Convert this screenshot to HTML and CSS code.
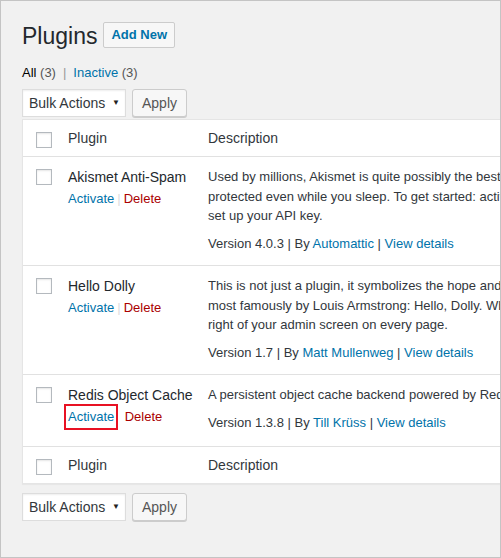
FILE: index.html
```html
<!DOCTYPE html>
<html>
<head>
<meta charset="utf-8">
<link rel="stylesheet" href="styles.css">
</head>
<body>
<div class="frame">
  <div class="wrap">
    <div class="title-row">
      <h1 class="page-title">Plugins</h1>
      <a class="add-new">Add New</a>
    </div>
    <ul class="subsubsub">
      <li><a class="current">All <span class="count">(3)</span></a><span class="sep">|</span></li>
      <li><a class="link">Inactive <span class="count">(3)</span></a></li>
    </ul>
    <div class="tablenav">
      <div class="select">Bulk Actions <span class="arrow">▼</span></div>
      <button class="button">Apply</button>
    </div>
    <div class="table-box">
      <div class="row head">
        <div class="cb"><span class="checkbox"></span></div>
        <div class="name th">Plugin</div>
        <div class="desc th">Description</div>
      </div>
      <div class="row item">
        <div class="cb"><span class="checkbox"></span></div>
        <div class="name">
          <div class="plugin-name">Akismet Anti-Spam</div>
          <div class="actions"><a class="link">Activate</a><span class="asep">|</span><a class="delete">Delete</a></div>
        </div>
        <div class="desc">
          <p class="desc-text">Used by millions, Akismet is quite possibly the best way in the world to protect your blog from spam. It keeps your site<br>protected even while you sleep. To get started: activate the Akismet plugin and then go to your Akismet Settings page to<br>set up your API key.</p>
          <p class="meta">Version 4.0.3 | By <a class="link">Automattic</a> | <a class="link">View details</a></p>
        </div>
      </div>
      <div class="row item">
        <div class="cb"><span class="checkbox"></span></div>
        <div class="name">
          <div class="plugin-name">Hello Dolly</div>
          <div class="actions"><a class="link">Activate</a><span class="asep">|</span><a class="delete">Delete</a></div>
        </div>
        <div class="desc">
          <p class="desc-text">This is not just a plugin, it symbolizes the hope and enthusiasm of an entire generation summed up in two words sung<br>most famously by Louis Armstrong: Hello, Dolly. When activated you will randomly see a lyric from Hello, Dolly in the upper<br>right of your admin screen on every page.</p>
          <p class="meta">Version 1.7 | By <a class="link">Matt Mullenweg</a> | <a class="link">View details</a></p>
        </div>
      </div>
      <div class="row item last">
        <div class="cb"><span class="checkbox"></span></div>
        <div class="name">
          <div class="plugin-name">Redis Object Cache</div>
          <div class="actions"><a class="link highlight">Activate</a><span class="asep hidden">|</span><a class="delete">Delete</a></div>
        </div>
        <div class="desc">
          <p class="desc-text">A persistent object cache backend powered by Redis. Supports Predis, PhpRedis, HHVM, replication, clustering and WP-CLI.</p>
          <p class="meta">Version 1.3.8 | By <a class="link">Till Krüss</a> | <a class="link">View details</a></p>
        </div>
      </div>
      <div class="row head foot">
        <div class="cb"><span class="checkbox"></span></div>
        <div class="name th">Plugin</div>
        <div class="desc th">Description</div>
      </div>
    </div>
    <div class="tablenav bottom">
      <div class="select">Bulk Actions <span class="arrow">▼</span></div>
      <button class="button">Apply</button>
    </div>
  </div>
</div>
</body>
</html>
```

FILE: styles.css
```css
* { box-sizing: border-box; }
html, body { margin: 0; padding: 0; }
body {
  font-family: "Liberation Sans", Arial, sans-serif;
  font-size: 13px;
  color: #444;
  background: #fff;
}
.frame {
  width: 501px;
  height: 558px;
  border: 1px solid #c4c4c4;
  background: #f1f1f1;
  overflow: hidden;
}
.wrap {
  padding: 20px 0 0 21px;
  width: 900px;
}
.title-row {
  display: flex;
  align-items: center;
  height: 28px;
}
.page-title {
  margin: 0;
  font-size: 23px;
  font-weight: 400;
  color: #23282d;
  line-height: 29px;
  position: relative;
  top: 1px;
}
.add-new {
  margin-left: 6px;
  height: 26px;
  line-height: 24px;
  padding: 0 7px;
  border: 1px solid #ccc;
  border-radius: 2px;
  background: #f7f7f7;
  color: #0073aa;
  font-weight: 600;
  font-size: 13px;
}
.subsubsub {
  list-style: none;
  margin: 14px 0 0;
  padding: 0;
  display: flex;
  font-size: 13px;
  line-height: 20px;
  color: #666;
}
.subsubsub .current { color: #000; font-weight: 400; }
.subsubsub .count { color: #555; }
.subsubsub .sep { margin: 0 7px 0 7px; color: #999; }
.link { color: #0073aa; }
.tablenav {
  display: flex;
  gap: 6px;
  margin-top: 6px;
  height: 28px;
}
.select {
  width: 104px;
  height: 28px;
  border: 1px solid #ddd;
  background: #fff;
  box-shadow: inset 0 1px 2px rgba(0,0,0,.07);
  color: #32373c;
  font-size: 14px;
  line-height: 26px;
  padding-left: 6px;
  position: relative;
}
.select .arrow {
  position: absolute;
  right: 5px;
  top: 0;
  font-size: 8px;
  color: #222;
}
.button {
  width: 55px;
  height: 28px;
  border: 1px solid #ccc;
  border-radius: 3px;
  background: #f7f7f7;
  box-shadow: 0 1px 0 #ccc;
  color: #555;
  font-family: inherit;
  font-size: 14px;
  padding: 0;
}
.table-box {
  margin-top: 2px;
  width: 860px;
  background: #fff;
  border: 1px solid #e5e5e5;
  box-shadow: 0 1px 1px rgba(0,0,0,.04);
}
.row {
  display: flex;
  border-bottom: 1px solid #e1e1e1;
}
.row.foot { border-bottom: 0; border-top: 1px solid #e1e1e1; margin-top: -1px; }
.cb { width: 35px; padding: 12px 0 0 13px; flex: none; }
.checkbox {
  display: block;
  width: 16px;
  height: 16px;
  border: 1px solid #b4b9be;
  background: #fff;
  box-shadow: inset 0 1px 2px rgba(0,0,0,.1);
}
.name { width: 140px; flex: none; padding: 10px 10px 12px 10px; white-space: nowrap; }
.desc { flex: 1; padding: 10px 10px 12px 10px; white-space: nowrap; }
.row.last .desc { padding-bottom: 14px; }
.th {
  font-size: 14px;
  color: #32373c;
  line-height: 19px;
  padding-top: 9px;
  padding-bottom: 8px;
}
.head .cb { padding-top: 12px; }
.plugin-name {
  font-size: 14px;
  color: #23282d;
  line-height: 20px;
}
.actions {
  margin-top: 2px;
  font-size: 13px;
  line-height: 20px;
  display: flex;
}
.asep { color: #ddd; margin: 0 3px; }
.asep.hidden { visibility: hidden; }
.delete { color: #a00; }
.highlight {
  outline: 2px solid #e81123;
  outline-offset: 1px;
  padding: 0 1px;
  margin-left: -1px;
}
p { margin: 0; }
.desc-text { font-size: 13px; line-height: 19.5px; color: #32373c; }
.meta { margin-top: 8px; font-size: 13px; line-height: 19.5px; color: #32373c; }
.bottom { margin-top: 9px; }
```
